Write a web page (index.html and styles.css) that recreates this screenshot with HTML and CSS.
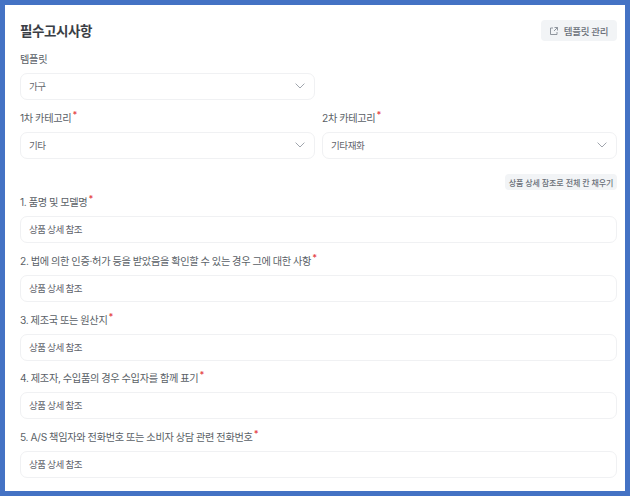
FILE: index.html
```html
<!DOCTYPE html>
<html lang="ko">
<head>
    <meta charset="UTF-8">
    <meta name="viewport" content="width=device-width, initial-scale=1.0">
    <title>필수고시사항</title>
    <link rel="stylesheet" href="styles.css">
</head>
<body>
    <div class="marco">
        <div class="cabecera">
            <h1>필수고시사항</h1>
            <button type="button" class="btn-plantilla">
                <svg width="8" height="8" viewBox="0 0 8 8" fill="none" stroke="#858b94" stroke-width="0.9">
                    <path d="M3 1H0.5V7.5H7V5"/>
                    <path d="M4.5 0.5H7.5V3.5M7.5 0.5L4 4"/>
                </svg>
                템플릿 관리
            </button>
        </div>

        <div class="campo campo-mitad">
            <div class="etiqueta">템플릿</div>
            <div class="caja">가구
                <svg class="flecha" width="10" height="6" viewBox="0 0 10 6" fill="none" stroke="#a0a5ad" stroke-width="1"><path d="M0.6 0.6L5 5L9.4 0.6"/></svg>
            </div>
        </div>

        <div class="fila">
            <div class="campo">
                <div class="etiqueta">1차 카테고리<span class="req">*</span></div>
                <div class="caja">기타
                    <svg class="flecha" width="10" height="6" viewBox="0 0 10 6" fill="none" stroke="#a0a5ad" stroke-width="1"><path d="M0.6 0.6L5 5L9.4 0.6"/></svg>
                </div>
            </div>
            <div class="campo">
                <div class="etiqueta">2차 카테고리<span class="req">*</span></div>
                <div class="caja">기타재화
                    <svg class="flecha" width="10" height="6" viewBox="0 0 10 6" fill="none" stroke="#a0a5ad" stroke-width="1"><path d="M0.6 0.6L5 5L9.4 0.6"/></svg>
                </div>
            </div>
        </div>

        <div class="acciones">
            <button type="button" class="btn-llenar">상품 상세 참조로 전체 칸 채우기</button>
        </div>

        <div class="lista">
            <div class="campo">
                <div class="etiqueta">1. 품명 및 모델명<span class="req">*</span></div>
                <div class="caja">상품 상세 참조</div>
            </div>
            <div class="campo">
                <div class="etiqueta">2. 법에 의한 인증·허가 등을 받았음을 확인할 수 있는 경우 그에 대한 사항<span class="req">*</span></div>
                <div class="caja">상품 상세 참조</div>
            </div>
            <div class="campo">
                <div class="etiqueta">3. 제조국 또는 원산지<span class="req">*</span></div>
                <div class="caja">상품 상세 참조</div>
            </div>
            <div class="campo">
                <div class="etiqueta">4. 제조자, 수입품의 경우 수입자를 함께 표기<span class="req">*</span></div>
                <div class="caja">상품 상세 참조</div>
            </div>
            <div class="campo">
                <div class="etiqueta">5. A/S 책임자와 전화번호 또는 소비자 상담 관련 전화번호<span class="req">*</span></div>
                <div class="caja">상품 상세 참조</div>
            </div>
        </div>
    </div>
</body>
</html>
```

FILE: styles.css
```css
html, body{
    margin: 0;
    height: 100%;
}
body{
    font-family: Inter, "Noto Sans CJK KR", sans-serif;
    background-color: white;
    color: #4b5058;
}
.marco{
    box-sizing: border-box;
    width: 630px;
    height: 496px;
    overflow: hidden;
    border: 5px solid #4472c4;
    padding: 15px 8px 0 15px;
    background-color: white;
}
.cabecera{
    display: flex;
    justify-content: space-between;
    align-items: center;
    height: 21px;
}
h1{
    margin: 0;
    font-size: 13.5px;
    line-height: 20px;
    font-weight: 700;
    letter-spacing: -0.4px;
    color: #3a3e45;
}
button{
    border: none;
    font-family: inherit;
    color: #6a7079;
    background-color: #f2f4f6;
    padding: 0;
}
.btn-plantilla{
    width: 76px;
    height: 21px;
    border-radius: 4px;
    font-size: 9.5px;
    font-weight: 500;
    letter-spacing: -0.3px;
    display: flex;
    justify-content: center;
    align-items: center;
    gap: 6px;
}
.campo{
    display: flex;
    flex-direction: column;
    flex: 1;
}
.campo-mitad{
    width: 295px;
    flex: none;
    margin-top: 9px;
}
.etiqueta{
    height: 18px;
    line-height: 18px;
    margin-bottom: 5px;
    font-size: 10.2px;
    letter-spacing: -0.3px;
    word-spacing: -0.4px;
    color: #5a5f67;
    white-space: nowrap;
}
.req{
    color: #e5484d;
    font-size: 9px;
    font-weight: 600;
    position: relative;
    top: -4px;
    margin-left: 1px;
}
.caja{
    box-sizing: border-box;
    height: 27px;
    border: 1px solid #f0f1f3;
    border-radius: 7px;
    padding: 0 8px 1px;
    font-size: 9.5px;
    letter-spacing: -0.4px;
    word-spacing: -0.7px;
    color: #5f646c;
    display: flex;
    justify-content: space-between;
    align-items: center;
}
.flecha{
    margin-right: 1px;
}
.fila{
    display: flex;
    gap: 7px;
    margin-top: 9px;
}
.acciones{
    display: flex;
    justify-content: flex-end;
    margin-top: 15px;
}
.btn-llenar{
    width: 112px;
    height: 16px;
    border-radius: 4px;
    font-size: 8px;
    font-weight: 500;
    letter-spacing: -0.1px;
}
.lista{
    display: flex;
    flex-direction: column;
    gap: 8.75px;
    margin-top: 3px;
}
```
